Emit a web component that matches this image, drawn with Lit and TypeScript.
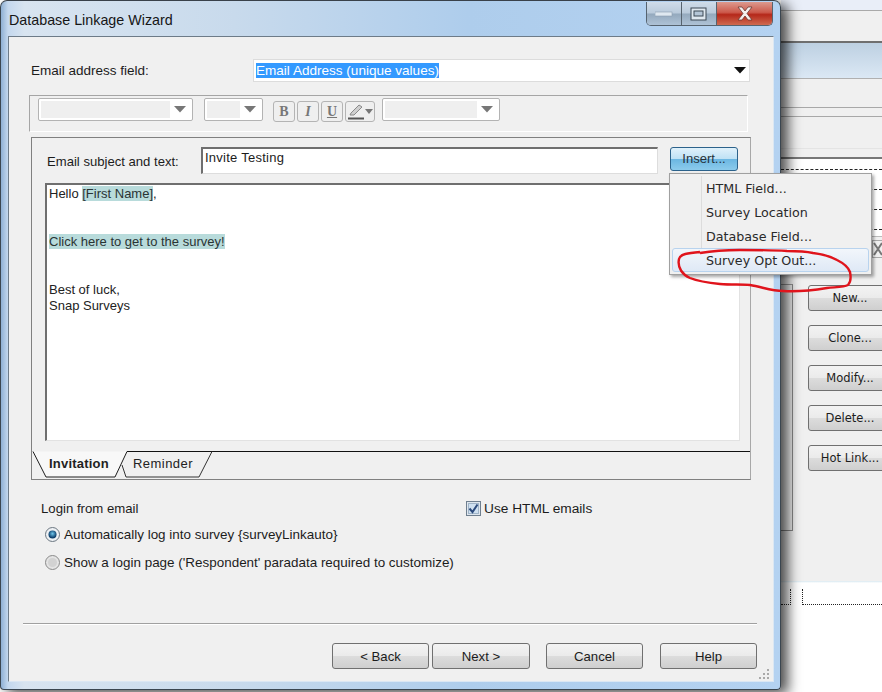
import { LitElement, html, css, svg } from "lit";
import { customElement } from "lit/decorators.js";

const arrow = (c: string) => html`<svg class="arrow" width="12" height="7" viewBox="0 0 12 7"><path d="M0 0H12L6 6.5Z" fill="${c}"/></svg>`;

@customElement("app-root")
export class AppRoot extends LitElement {
  static styles = css`
    :host { display: block; position: relative; width: 882px; height: 692px; overflow: hidden; background: #fff;
      font-family: "Liberation Sans", Arial, sans-serif; font-size: 13px; color: #1c1c1c; }
    * { box-sizing: border-box; }

    /* window behind */
    .back { position: absolute; left: 781px; top: 0; width: 101px; height: 692px; display: flex; flex-direction: column; }
    .b-top { height: 11px; background: #e9eef8; border-bottom: 1px solid #a9a9a9; }
    .b-menu { height: 32px; background: #f0f0f0; border-bottom: 2px solid #6f6f6f; }
    .b-ribbon { height: 36px; background: linear-gradient(#bdd0e2, #dbe8f4); border-bottom: 1px solid #b0b0b0; }
    .b-strip { height: 29px; background: #f0f0f0; border-bottom: 1px solid #a8a8a8; }
    .b-strip3 { height: 9px; background: #f0f0f0; border-bottom: 1px solid #a8a8a8; }
    .b-strip4 { height: 32px; background: #f0f0f0; border-bottom: 1px solid #e4e4e4; }
    .b-strip2 { height: 10px; background: #f0f0f0; border-bottom: 2px solid #777; }
    .b-white { height: 77px; background: #fff; display: flex; flex-direction: column; gap: 19px; padding-top: 10px; }
    .dash { height: 1px; border-top: 1px dashed #222; flex: none; }
    .b-panel { height: 345px; background: #f0f0f0; border-top: 1px solid #bbb; display: flex; }
    .b-list { width: 12px; height: 247px; margin-top: 47px; border-right: 1px solid #8a8a8a; border-top: 1px solid #9a9a9a; border-bottom: 1px solid #8a8a8a; background: #efefef; flex: none; }
    .b-btns { margin-left: 15px; padding-top: 48px; display: flex; flex-direction: column; gap: 14px; width: 84px; flex: none; }
    .b-btns .btn { width: 84px; height: 26px; font-family: "DejaVu Sans", sans-serif; font-size: 11.5px; }
    .b-foot { height: 2px; background: linear-gradient(#d8e8f0, #fff); }
    .b-dots { display: flex; height: 24px; background: #fff; padding-top: 6px; }
    .d1 { width: 11px; height: 16px; border: 1px dotted #222; border-left: none; border-top: none; }
    .d2 { margin-left: 11px; width: 90px; height: 16px; border: 1px dotted #222; border-top: none; border-right: none; }
    .close-bit { position: absolute; left: 872px; top: 240px; width: 10px; height: 18px; background: #f0f0f0; border: 1px solid #aaa; border-right: none; overflow: hidden; }
    .close-bit svg { display: block; }

    /* dialog */
    .win { position: absolute; left: 0; top: 0; width: 781px; height: 690px; padding: 0 6px 7px 7px; display: flex; flex-direction: column;
      border: 1px solid #3b4650; border-top-color: #39414a; border-radius: 7px 7px 4px 4px;
      background: linear-gradient(90deg, #8fb0d4 0, #c4d8ee .9%, #d8e4f0 3%, #c8daec 30%, #aecdec 60%, #b4d2f1 100%);
      box-shadow: 7px 4px 13px rgba(0,0,0,.7); }
    .title { height: 35px; flex: none; font-size: 14.3px; line-height: 39px; color: #161616; padding-left: 1px; }
    .ctrls { position: absolute; right: 7px; top: 1px; width: 127px; height: 24px; display: flex; border: 1px solid #56636f; border-top: none; border-radius: 0 0 5px 5px; overflow: hidden; }
    .ctrl { width: 35px; background: linear-gradient(#cfdce9 0, #b9cadb 48%, #94a9bd 52%, #aec2d6 100%); border-right: 1px solid #56636f; display: flex; align-items: center; justify-content: center; }
    .ctrl.x { flex: 1; border: none; background: linear-gradient(#dc9a8e 0, #cc5a4c 45%, #b5281a 55%, #cf6a50 100%); }
    .body { flex: 1; background: #f0f0f0; border: 1px solid #6d7b88; border-right-color: #dbe7f3; border-bottom-color: #dbe7f3; display: flex; flex-direction: column; position: relative; }

    .r-email { display: flex; align-items: center; margin: 22px 0 0 22px; height: 23px; }
    .r-email label { width: 222px; font-size: 13.5px; }
    .email-combo { width: 497px; height: 23px; background: #fff; border: 1px solid #dcdcdc; display: flex; align-items: center; padding: 0 3px 0 2px; justify-content: space-between; }
    .sel { background: #3399ff; color: #fff; font-size: 13.55px; height: 15px; line-height: 15px; white-space: nowrap; }

    .toolbar { margin: 13px 0 0 20px; width: 719px; height: 37px; border: 1px solid #fff; border-top-color: #a5a5a5; border-left-color: #a5a5a5; display: flex; padding: 2px 0 0 8px; }
    .combo { height: 23px; background: #fff; border: 1px solid #b3b3b3; border-radius: 2px; padding: 2px; display: flex; align-items: center; flex: none; }
    .combo .fill { height: 100%; background: #efefef; }
    .combo .arrow { margin: 0 auto; }
    .c1 { width: 155px; } .c1 .fill { width: 129px; }
    .c2 { width: 59px; margin-left: 11px; } .c2 .fill { width: 33px; }
    .c3 { width: 118px; margin-left: 7px; } .c3 .fill { width: 92px; }
    .tools { display: flex; gap: 2px; margin: 3px 0 0 10px; }
    .tool { width: 22px; height: 21px; border: 1px solid #b4b4b4; border-radius: 3px; display: flex; align-items: center; justify-content: center; font-family: "Liberation Serif", serif; font-size: 14px; font-weight: 700; color: #777; background: #efefef; }
    .tool.i { font-style: italic; }
    .tool.u { text-decoration: underline; }
    .tool.pen { width: 30px; gap: 1px; }

    .panel { margin: 5px 0 0 22px; width: 720px; height: 343px; border: 1px solid #808080; border-right-color: #a8a8a8; padding: 9px 0 0 0; position: relative; }
    .r-subj { display: flex; height: 27px; margin-left: 15px; }
    .r-subj label { width: 154px; padding-top: 7px; font-size: 13.1px; }
    .subj { width: 457px; height: 27px; background: #fff; border: 2px solid #fdfdfd; border-top-color: #6f6f6f; border-left-color: #6f6f6f; font-size: 13px; padding: 1px 0 0 2px; letter-spacing: .25px; border-right-width: 1px; border-bottom-width: 1px; border-right-color: #ddd; border-bottom-color: #ddd; }
    .insert { width: 68px; height: 24px; margin-left: 12px; border: 1px solid #2c628b; border-radius: 3px; background: linear-gradient(#e0f1fb 0, #bfe2f5 48%, #6cb7e2 52%, #8ccbec 100%); text-align: center; line-height: 22px; font-size: 13px; color: #27323a; }
    .editor { margin: 9px 0 0 13px; width: 695px; height: 258px; background: #fff; border: 2px solid #6f6f6f; border-right: 1px solid #e2e2e2; border-bottom: 1px solid #e2e2e2; padding: 1px 0 0 2px; font-size: 13px; line-height: 16px; color: #222; }
    .editor div { height: 16px; white-space: nowrap; }
    .gap2 { margin-top: 32px; }
    mark { background: #b8dbdb; color: #2a3434; }
    .tabs { display: block; margin-top: 10px; }
    .tabs text { font-family: "Liberation Sans", Arial, sans-serif; font-size: 13px; fill: #222; letter-spacing: .2px; }
    .tabs .rem { letter-spacing: .45px; }

    .r-login { display: flex; margin: 20px 0 0 32px; height: 17px; align-items: center; }
    .r-login .l { width: 425px; font-size: 13.2px; }
    .check { display: flex; align-items: center; gap: 3px; font-size: 13.7px; }
    .radio { display: flex; align-items: center; gap: 4px; margin-left: 36px; height: 16px; font-size: 13.45px; }
    .r1 { margin-top: 9px; } .r2 { margin-top: 12px; }
    .foot { margin-top: auto; flex: none; }
    .sep { margin: 0 16px 0 14px; height: 2px; border-top: 1px solid #a0a0a0; border-bottom: 1px solid #fff; }
    .foot-btns { display: flex; justify-content: flex-end; padding: 18px 16px 12px 0; }
    .btn { border: 1px solid #707070; border-radius: 3px; background: linear-gradient(#f3f3f3 0, #ebebeb 48%, #dcdcdc 52%, #cfcfcf 100%); display: flex; align-items: center; justify-content: center; color: #1c1c1c; flex: none; white-space: nowrap; }
    .foot-btns .btn { width: 97px; height: 26px; font-size: 13.2px; }
    .foot-btns .btn:nth-child(2) { margin-left: 3px; width: 98px; }
    .foot-btns .btn:nth-child(3) { margin-left: 16px; }
    .foot-btns .btn:nth-child(4) { margin-left: 17px; }
    .grip { position: absolute; right: 3px; bottom: 1px; }

    /* overlays */
    .menu { position: absolute; left: 669px; top: 173px; width: 203px; height: 102px; background: #f0f0f0; border: 1px solid #a0a0a0; box-shadow: 2px 2px 3px rgba(0,0,0,.35); padding: 2px; font-family: "DejaVu Sans", sans-serif; font-size: 12.7px; color: #2a2a2a; display: flex; flex-direction: column; }
    .gutter { position: absolute; left: 31px; top: 2px; bottom: 2px; width: 1px; background: #dcdcdc; }
    .item { height: 24px; line-height: 24px; padding-left: 33px; border: 1px solid transparent; white-space: nowrap; position: relative; }
    .item.on { border-color: #b8d3ee; border-radius: 3px; background: linear-gradient(#f2f6fb, #dfe9f6); }
    .ink { position: absolute; left: 0; top: 0; pointer-events: none; }
  `;

  render() {
    const tools = [["B", ""], ["I", "i"], ["U", "u"]];
    const menu = ["HTML Field...", "Survey Location", "Database Field...", "Survey Opt Out..."];
    return html`
      <div class="back">
        <div class="b-top"></div>
        <div class="b-menu"></div>
        <div class="b-ribbon"></div>
        <div class="b-strip"></div>
        <div class="b-strip3"></div>
        <div class="b-strip4"></div>
        <div class="b-strip2"></div>
        <div class="b-white">
          <div class="dash"></div><div class="dash"></div><div class="dash"></div><div class="dash"></div>
        </div>
        <div class="b-panel">
          <div class="b-list"></div>
          <div class="b-btns">
            ${["New...", "Clone...", "Modify...", "Delete...", "Hot Link..."].map((t) => html`<div class="btn">${t}</div>`)}
          </div>
        </div>
        <div class="b-foot"></div>
        <div class="b-dots"><div class="d1"></div><div class="d2"></div></div>
      </div>
      <div class="close-bit">
        <svg width="10" height="16" viewBox="0 0 10 16"><path d="M1 2L9 14M9 2L1 14" stroke="#777" stroke-width="2" fill="none"/></svg>
      </div>

      <div class="win">
        <div class="title">Database Linkage Wizard</div>
        <div class="ctrls">
          <div class="ctrl">
            <svg width="18" height="6"><rect x="0" y="1" width="17" height="4" fill="#dfe8f0" stroke="#8a9cae" stroke-width=".6"/></svg>
          </div>
          <div class="ctrl">
            <svg width="18" height="14"><rect x="1" y="1" width="15" height="12" fill="#dfe8f0" stroke="#3c4854"/><rect x="4" y="4" width="9" height="5" fill="#b5c6d7" stroke="#3c4854"/></svg>
          </div>
          <div class="ctrl x">
            <svg width="18" height="15" viewBox="0 0 18 15"><path d="M2 1H6L9 5L12 1H16L11 7.5L16 14H12L9 10L6 14H2L7 7.5Z" fill="#f4f0ee" stroke="#6b3a34" stroke-width=".8"/></svg>
          </div>
        </div>
        <div class="body">
          <div class="r-email">
            <label>Email address field:</label>
            <div class="email-combo"><span class="sel">Email Address (unique values)</span>${arrow("#111")}</div>
          </div>
          <div class="toolbar">
            <div class="combo c1"><div class="fill"></div>${arrow("#777")}</div>
            <div class="combo c2"><div class="fill"></div>${arrow("#777")}</div>
            <div class="tools">
              ${tools.map(([t, c]) => html`<div class="tool ${c}">${t}</div>`)}
              <div class="tool pen">
                <svg width="16" height="17" viewBox="0 0 16 17"><path d="M3 10L11 2L14 4L6 12L2 12Z" fill="#cfcfcf" stroke="#8a8a8a"/><rect x="0" y="14.5" width="16" height="2" fill="#555"/></svg>
                <svg width="8" height="5" viewBox="0 0 8 5"><path d="M0 0H8L4 5Z" fill="#777"/></svg>
              </div>
            </div>
            <div class="combo c3"><div class="fill"></div>${arrow("#777")}</div>
          </div>
          <div class="panel">
            <div class="r-subj">
              <label>Email subject and text:</label>
              <div class="subj">Invite Testing</div>
              <div class="insert">Insert...</div>
            </div>
            <div class="editor">
              <div>Hello <mark>[First Name]</mark>,</div>
              <div class="gap2"><mark>Click here to get to the survey!</mark></div>
              <div class="gap2">Best of luck,</div>
              <div>Snap Surveys</div>
            </div>
            <svg class="tabs" width="718" height="30" viewBox="0 0 718 30">
              ${svg`
                <path d="M1 .5L14 26H83L95 .5Z" fill="#f8f8f8"/>
                <path d="M95 .5H718" stroke="#111" fill="none"/>
                <path d="M1 .5L14 26H83L95 .5" fill="none" stroke="#1e1e1e"/>
                <path d="M90 14L94 26H167L180 .5" fill="none" stroke="#333"/>
                <text x="17" y="17" font-weight="700">Invitation</text>
                <text class="rem" x="101" y="17">Reminder</text>
              `}
            </svg>
          </div>
          <div class="r-login">
            <span class="l">Login from email</span>
            <span class="check">
              <svg width="15" height="15" viewBox="0 0 15 15"><rect x=".5" y=".5" width="14" height="14" fill="#dfe6ee" stroke="#6f7f8f"/><rect x="2.5" y="2.5" width="10" height="10" fill="#cfe0f0" stroke="#9fb4c8"/><path d="M3.5 7.5L6.5 11L11.5 3.5" fill="none" stroke="#2c4a7c" stroke-width="2"/></svg>
              Use HTML emails
            </span>
          </div>
          <div class="radio r1">
            <svg width="15" height="15" viewBox="0 0 15 15"><defs><radialGradient id="rb" cx=".5" cy=".4"><stop offset="0" stop-color="#6fc6ec"/><stop offset="1" stop-color="#0c3f6c"/></radialGradient></defs><circle cx="7.5" cy="7.5" r="7" fill="#eef1f4" stroke="#6b7680"/><circle cx="7.5" cy="7.5" r="4" fill="url(#rb)"/></svg>
            Automatically log into survey {surveyLinkauto}
          </div>
          <div class="radio r2">
            <svg width="15" height="15" viewBox="0 0 15 15"><circle cx="7.5" cy="7.5" r="7" fill="#e4e4e4" stroke="#8a8a8a"/><circle cx="7.5" cy="7.5" r="4.5" fill="#d2d2d2"/></svg>
            Show a login page ('Respondent' paradata required to customize)
          </div>
          <div class="foot">
            <div class="sep"></div>
            <div class="foot-btns">
              <div class="btn">&lt; Back</div>
              <div class="btn">Next &gt;</div>
              <div class="btn">Cancel</div>
              <div class="btn">Help</div>
            </div>
          </div>
          <svg class="grip" width="11" height="11" viewBox="0 0 11 11" fill="#a9a9a9">
            <rect x="8" y="0" width="2" height="2"/><rect x="8" y="4" width="2" height="2"/><rect x="8" y="8" width="2" height="2"/>
            <rect x="4" y="4" width="2" height="2"/><rect x="4" y="8" width="2" height="2"/><rect x="0" y="8" width="2" height="2"/>
          </svg>
        </div>
      </div>

      <div class="menu">
        <div class="gutter"></div>
        ${menu.map((m, i) => html`<div class="item ${i === 3 ? "on" : ""}">${m}</div>`)}
      </div>

      <svg class="ink" width="882" height="692" viewBox="0 0 882 692">
        <path d="M700 252C688 253 680 254 679 259C677 268 683 275 690 278C700 282 710 283 720 284C732 285 742 284 750 285C762 287 772 291 783 291C798 292 815 290 827 288C836 287 844 287 848 285C851 282 851 277 850 272C848 266 843 263 837 260C830 256 822 254 813 253C804 251 796 251 787 251C770 250 755 250 740 250C725 250 712 251 700 253" fill="none" stroke="#e0141c" stroke-width="2.4"/>
      </svg>
    `;
  }
}
